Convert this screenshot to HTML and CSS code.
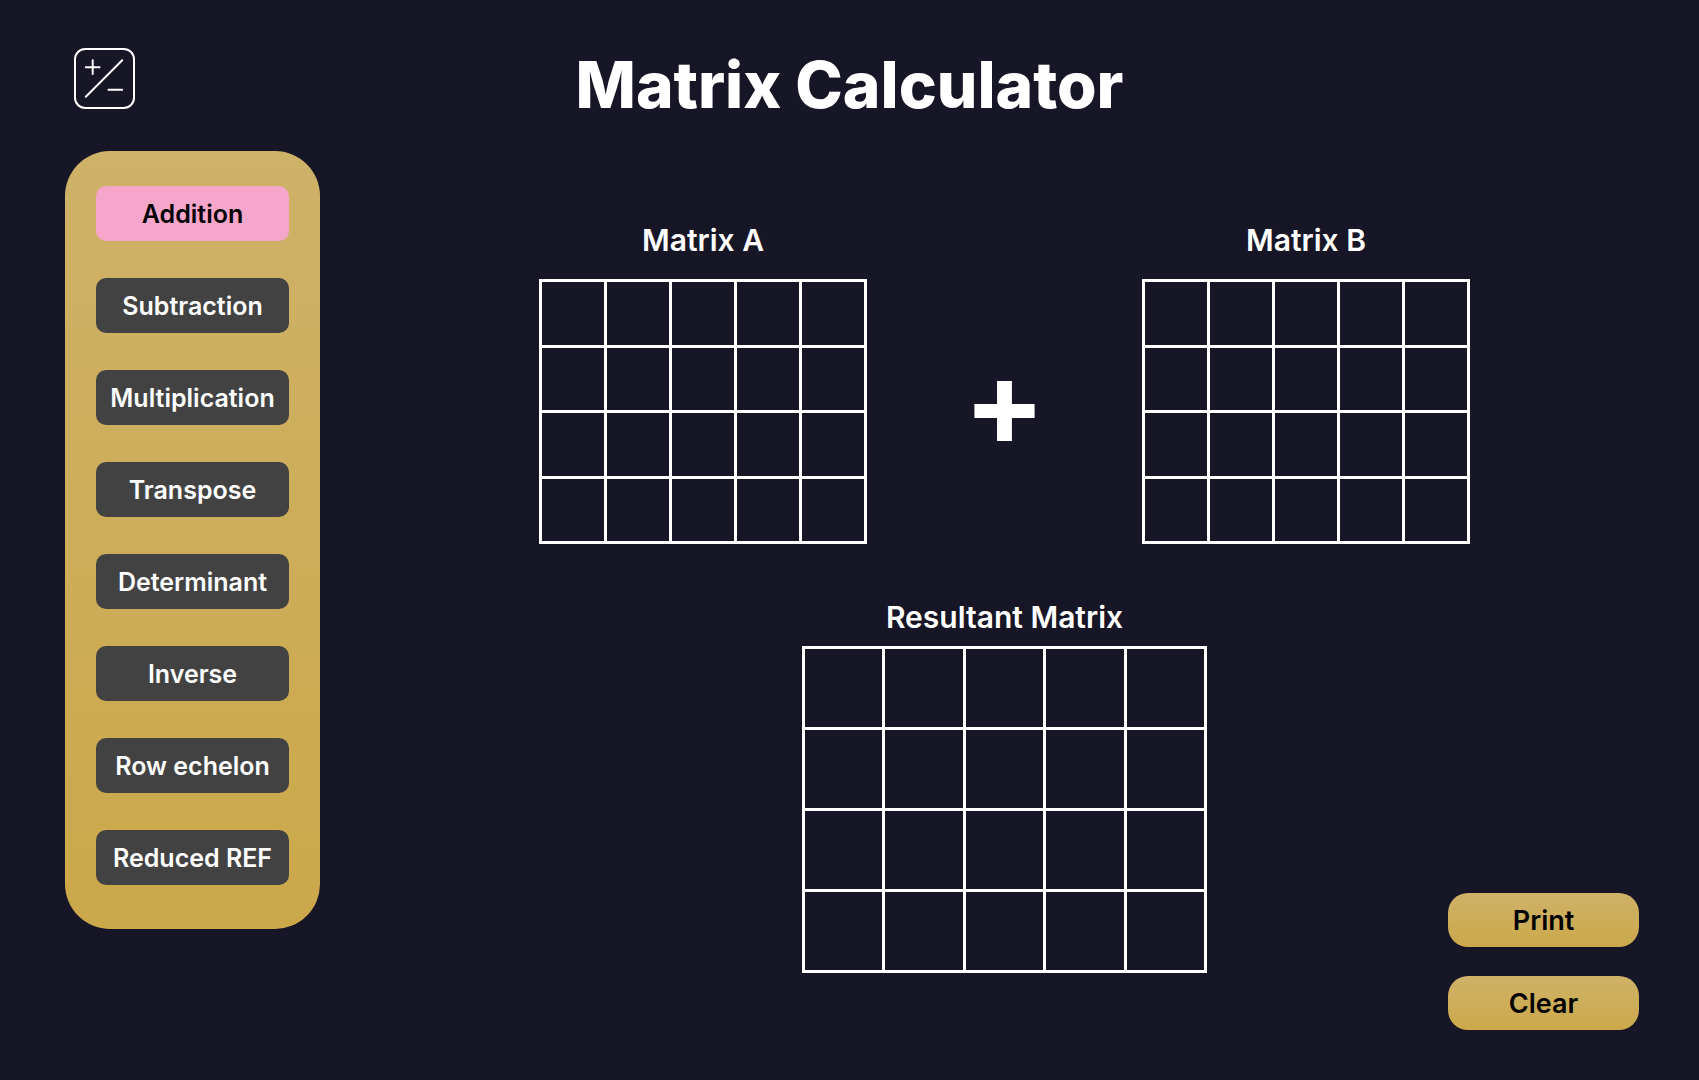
FILE: index.html
```html
<!DOCTYPE html>
<html lang="en">
<head>
<meta charset="utf-8">
<meta name="viewport" content="width=device-width, initial-scale=1">
<title>Matrix Calculator</title>
<link rel="stylesheet" href="styles.css">
</head>
<body>
<header class="header">
  <svg class="logo" viewBox="0 0 62 62" fill="none" stroke="#fff" stroke-width="2" stroke-linecap="round" aria-hidden="true">
    <rect x="1" y="1" width="60" height="60" rx="10.5"/>
    <path d="M12 19.500h14M19 12.500v14M35 42.500h14M12 49.500l37-37"/>
  </svg>
  <h1 class="title">Matrix Calculator</h1>
</header>
<div class="layout">
  <nav class="sidebar" aria-label="Operations">
    <button class="op op-active" type="button">Addition</button>
    <button class="op" type="button">Subtraction</button>
    <button class="op" type="button">Multiplication</button>
    <button class="op" type="button">Transpose</button>
    <button class="op" type="button">Determinant</button>
    <button class="op" type="button">Inverse</button>
    <button class="op" type="button">Row echelon</button>
    <button class="op" type="button">Reduced REF</button>
  </nav>
  <main class="workspace">
    <div class="operands">
      <section class="panel">
        <h2 class="label" id="label-a">Matrix A</h2>
        <table class="matrix" aria-labelledby="label-a" data-name="Matrix A"></table>
      </section>
      <div class="operator">+</div>
      <section class="panel">
        <h2 class="label" id="label-b">Matrix B</h2>
        <table class="matrix" aria-labelledby="label-b" data-name="Matrix B"></table>
      </section>
    </div>
    <div class="outcome">
      <section class="panel panel-result">
        <h2 class="label" id="label-r">Resultant Matrix</h2>
        <table class="matrix matrix-result" aria-labelledby="label-r"></table>
      </section>
      <div class="actions">
        <button class="action" type="button">Print</button>
        <button class="action" type="button">Clear</button>
      </div>
    </div>
  </main>
</div>
<script src="script.js"></script>
</body>
</html>
```
FILE: script.js
```js
const ROWS = 4;
const COLUMNS = 5;

// Operand matrices get an input in each cell; the result has plain cells.
document.querySelectorAll('.matrix').forEach((table) => {
  for (let r = 1; r <= ROWS; r += 1) {
    const row = table.insertRow();
    for (let c = 1; c <= COLUMNS; c += 1) {
      const cell = row.insertCell();
      if (table.dataset.name) {
        const input = document.createElement('input');
        input.type = 'text';
        input.className = 'entry';
        input.setAttribute('aria-label', `${table.dataset.name} row ${r} column ${c}`);
        cell.append(input);
      }
    }
  }
});
```
FILE: styles.css
```css
* {
  box-sizing: border-box;
}

body {
  margin: 0;
  min-height: 100vh;
  background: #171626;
  color: #fff;
  font-family: Inter, "Liberation Sans", sans-serif;
}

button,
input {
  font: inherit;
}

.header {
  display: grid;
  grid-template-columns: 1fr auto 1fr;
  align-items: start;
  padding: 40px 74px 21px;
}

.logo {
  width: 61px;
  height: 61px;
  margin-top: 8px;
}

.title {
  margin: 0;
  font-size: 64px;
  font-weight: 800;
  line-height: 90px;
}

.layout {
  display: flex;
  align-items: flex-start;
  gap: 50px;
  padding: 0 60px 50px 65px;
}

.sidebar {
  display: flex;
  flex: none;
  flex-direction: column;
  gap: 37px;
  width: 255px;
  padding: 35px 31px 44px;
  border-radius: 45px;
  background: linear-gradient(#ceb268, #cba84a);
}

.op {
  height: 55px;
  padding: 0;
  border: 0;
  border-radius: 10px;
  background: #424242;
  color: #fff;
  font-size: 25px;
  font-weight: 600;
}

.op-active {
  background: #f6a5cb;
  color: #000;
}

.workspace {
  flex: 1;
  padding-top: 69px;
}

.operands {
  display: flex;
  align-items: flex-end;
  justify-content: center;
  gap: 54px;
}

.panel {
  display: flex;
  flex-direction: column;
  align-items: center;
  gap: 19px;
}

.panel-result {
  grid-column: 2;
  gap: 9px;
}

.label {
  margin: 0;
  font-size: 30px;
  font-weight: 600;
  line-height: 40px;
}

.matrix {
  width: 328px;
  height: 265px;
  table-layout: fixed;
  border-collapse: separate;
  border-spacing: 3px;
  background: #fff;
}

.matrix td {
  padding: 0;
  background: #171626;
}

.matrix-result {
  width: 405px;
  height: 327px;
}

.entry {
  display: block;
  width: 100%;
  height: 62px;
  padding: 0;
  border: 0;
  background: transparent;
  color: #fff;
  font-size: 25px;
  text-align: center;
}

.operator {
  width: 167px;
  font-size: 120px;
  font-weight: 700;
  line-height: 282px;
  text-align: center;
}

.outcome {
  display: grid;
  grid-template-columns: 1fr auto 1fr;
  align-items: start;
  margin-top: 53px;
}

.actions {
  display: flex;
  flex-direction: column;
  gap: 29px;
  align-self: end;
  justify-self: end;
  margin-top: 296px;
}

.action {
  width: 191px;
  height: 54px;
  padding: 0;
  border: 0;
  border-radius: 20px;
  background: linear-gradient(#ceb268, #cba84a);
  color: #000;
  font-size: 27px;
  font-weight: 600;
}
```
